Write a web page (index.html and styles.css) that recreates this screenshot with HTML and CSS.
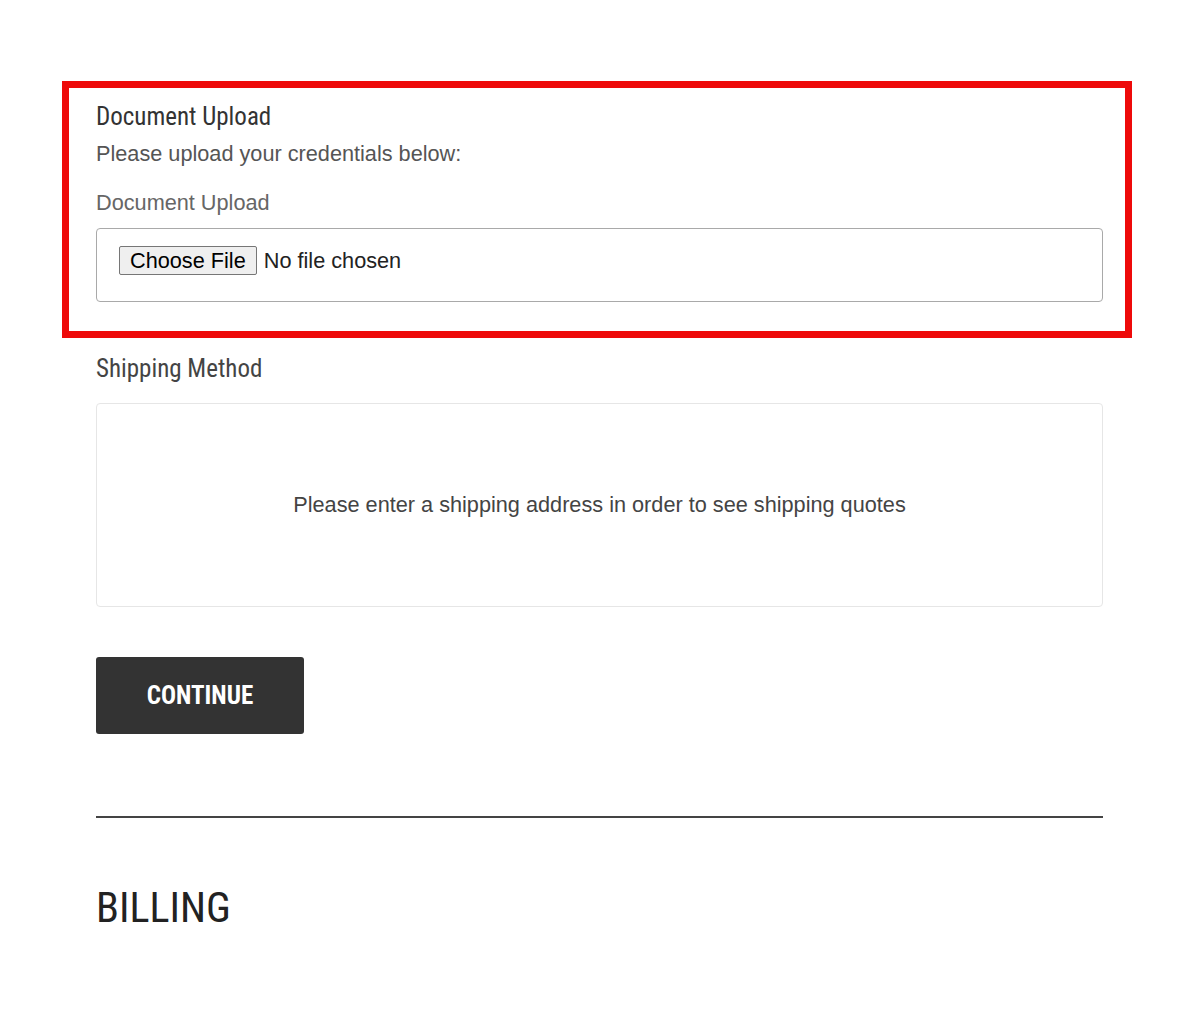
FILE: index.html
```html
<!DOCTYPE html>
<html lang="en">
<head>
<meta charset="utf-8">
<title>Checkout</title>
<link rel="stylesheet" href="styles.css">
</head>
<body>
<div class="page">
  <section class="upload-highlight">
    <h3 class="section-title">Document Upload</h3>
    <p class="hint">Please upload your credentials below:</p>
    <label class="field-label" for="doc">Document Upload</label>
    <div class="file-field">
      <input type="file" id="doc" class="file-input">
    </div>
  </section>

  <div class="content">
    <h3 class="section-title shipping-title">Shipping Method</h3>
    <div class="shipping-box">
      <p>Please enter a shipping address in order to see shipping quotes</p>
    </div>
    <button class="continue-btn" type="button"><span>CONTINUE</span></button>
    <hr class="divider">
    <h2 class="billing-title">BILLING</h2>
  </div>
</div>
</body>
</html>
```
FILE: styles.css
```css
* { box-sizing: border-box; }
html, body { margin: 0; padding: 0; background: #fff; }
body { font-family: "Liberation Sans", Arial, sans-serif; color: #555; }

.page { padding-top: 81px; }

.upload-highlight {
  margin-left: 62px;
  width: 1070px;
  border: 7px solid #ee0a0a;
  padding: 15px 22px 29px 27px;
}

.section-title {
  margin: 0;
  font-family: Roboto, "Liberation Sans", sans-serif;
  font-stretch: condensed;
  font-weight: 400;
  font-size: 25px;
  line-height: 28px;
  color: #333;
}

.hint {
  margin: 10px 0 0;
  font-size: 21.7px;
  line-height: 26px;
  color: #555;
}

.field-label {
  display: block;
  margin-top: 23px;
  font-size: 21.7px;
  line-height: 26px;
  color: #666;
}

.file-field {
  margin-top: 12px;
  height: 74px;
  border: 1px solid #a9a9a9;
  border-radius: 4px;
  padding: 17px 22px 0;
}

.file-input {
  font-family: "Liberation Sans", Arial, sans-serif;
  font-size: 21.7px;
  color: #222;
}

.file-input::file-selector-button {
  font-family: "Liberation Sans", Arial, sans-serif;
  font-size: 21.7px;
  height: 29px;
  padding: 0 10px;
  margin-right: 7px;
  background: #efefef;
  border: 1px solid #767676;
  border-radius: 2px;
  color: #000;
}

.content {
  margin-left: 96px;
  width: 1007px;
}

.shipping-title {
  margin-top: 17px;
  color: #444;
}

.shipping-box {
  margin-top: 20px;
  height: 204px;
  border: 1px solid #e6e6e6;
  border-radius: 4px;
  display: flex;
  align-items: center;
  justify-content: center;
}

.shipping-box p {
  margin: 0;
  font-size: 21.7px;
  line-height: 26px;
  color: #444;
}

.continue-btn {
  display: flex;
  align-items: center;
  justify-content: center;
  margin-top: 50px;
  width: 208px;
  height: 77px;
  background: #333;
  border: none;
  border-radius: 3px;
  color: #fff;
  font-family: Roboto, "Liberation Sans", sans-serif;
  font-stretch: condensed;
  font-weight: 700;
  font-size: 25px;
  padding: 0;
}

.divider {
  margin: 82px 0 0;
  border: none;
  border-top: 2px solid #444;
}

.billing-title {
  margin: 67px 0 0;
  font-family: Roboto, "Liberation Sans", sans-serif;
  font-stretch: condensed;
  font-weight: 400;
  font-size: 42px;
  line-height: 46px;
  color: #222;
}
```
